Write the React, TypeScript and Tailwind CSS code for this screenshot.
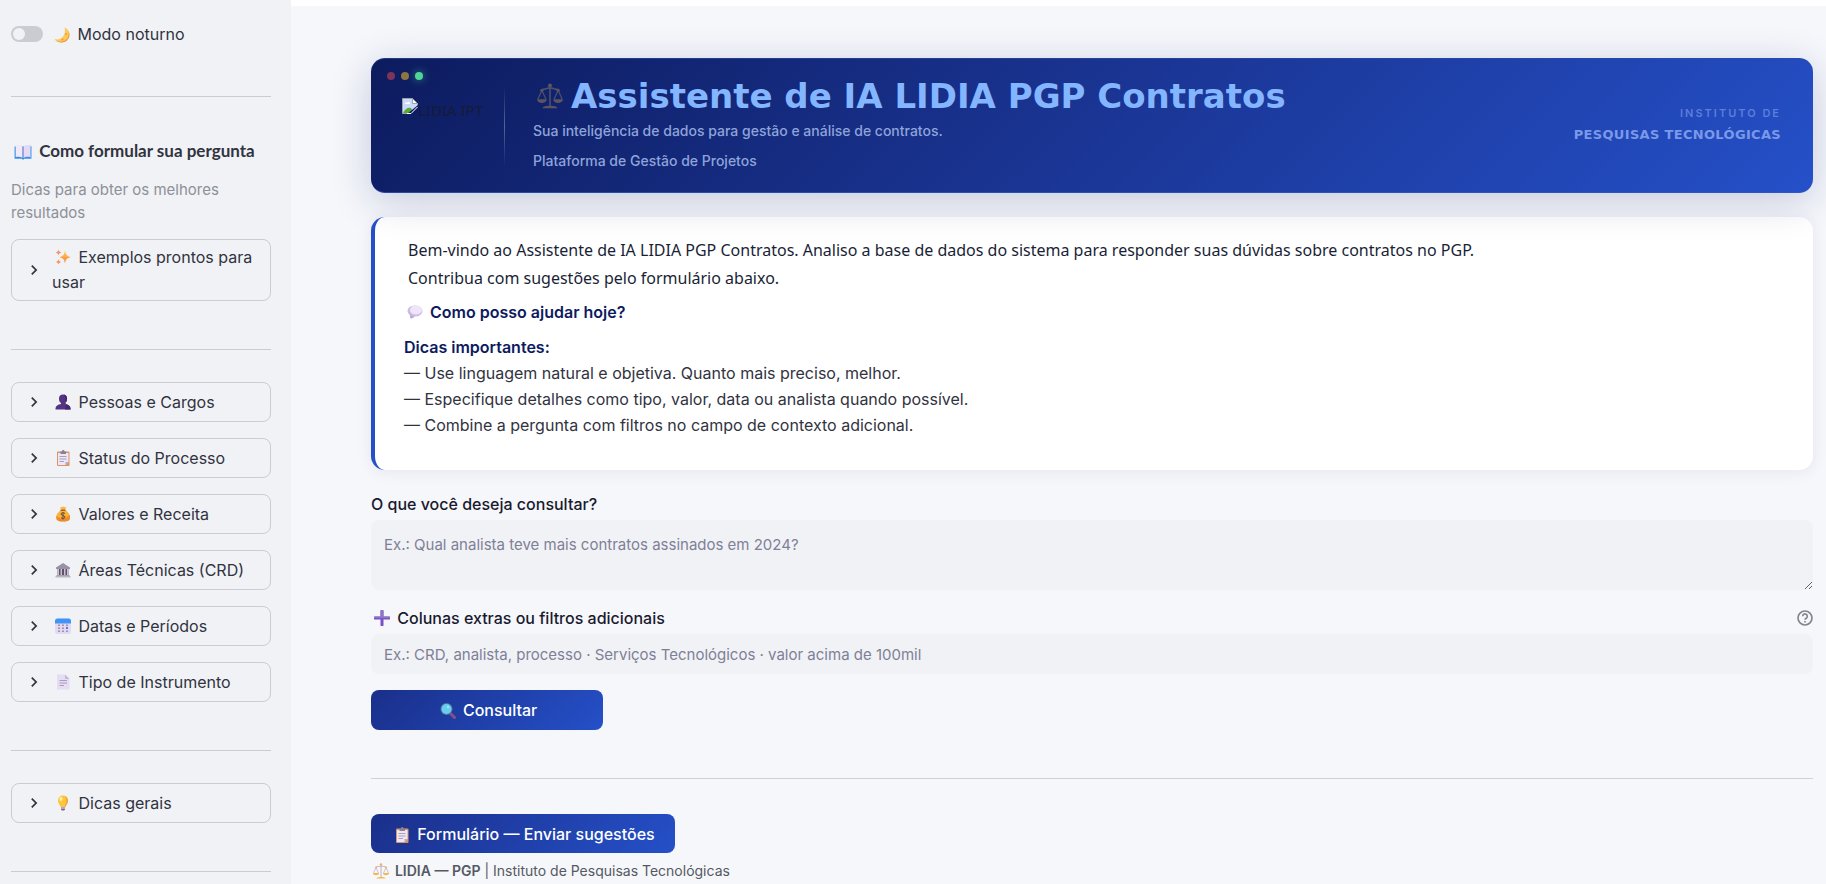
import type React from "react"

import { useState } from "react"
import { clsx } from "clsx"

function Emoji({ label, className, children }: { label: string; className?: string; children: React.ReactNode }) {
  return (
    <svg viewBox="0 0 32 32" role="img" aria-label={label} className={clsx("inline-block shrink-0", className)}>
      {children}
    </svg>
  )
}

function MoonEmoji({ className }: { className?: string }) {
  return (
    <Emoji label="Lua" className={className}>
      <path d="M21 1c6 2 10 8 10 14 0 9-7 16-16 16C9 31 4 29 1 24c7 2 13 0 17-5s5-11 3-18z" fill="#fcc85a" />
      <path d="M29 9c2 12-5 20-15 20-5 0-9-1-12-4 3 4 8 6 13 6 9 0 16-7 16-16 0-2-1-4-2-6z" fill="#f19b4c" />
      <circle cx="24" cy="14" r="2" fill="#e8a03c" />
      <circle cx="17" cy="25" r="2" fill="#e8a03c" />
    </Emoji>
  )
}

function BookEmoji({ className }: { className?: string }) {
  return (
    <Emoji label="Livro" className={className}>
      <path d="M1 6h30v22H18l-2 2-2-2H1z" fill="#3b8ee8" />
      <path d="M3 4c5-1 10 0 12 2v20c-3-2-8-2-12-1z" fill="#efe9fa" />
      <path d="M29 4c-5-1-10 0-12 2v20c3-2 8-2 12-1z" fill="#e4daf5" />
      <path d="M15 6h2v20h-2z" fill="#a99bc4" />
      <path d="M29 5h2v21h-2z" fill="#8fc3f7" />
    </Emoji>
  )
}

function SparklesEmoji({ className }: { className?: string }) {
  return (
    <Emoji label="Brilhos" className={className}>
      <path d="M20 3c1 8 3 11 11 13-8 2-10 5-11 13-1-8-3-11-11-13 8-2 10-5 11-13z" fill="#fdb446" />
      <path d="M20 16l11 0c-8 2-10 5-11 13-1-8-3-11-11-13z" fill="#fa9a50" />
      <path d="M7 1c1 4 2 5 6 6-4 1-5 2-6 6-1-4-2-5-6-6 4-1 5-2 6-6z" fill="#fb8f6b" />
      <path d="M7 20c1 4 2 5 5 6-3 1-4 2-5 5-1-3-2-4-5-5 3-1 4-2 5-6z" fill="#fb8f6b" />
    </Emoji>
  )
}

function PersonEmoji({ className }: { className?: string }) {
  return (
    <Emoji label="Pessoa" className={className}>
      <path
        d="M16 1c-5 0-8 3-8 8 0 4 1 7 4 9v2c-6 1-11 4-11 9v2h30v-2c0-5-5-8-11-9v-2c3-2 4-5 4-9 0-5-3-8-8-8z"
        fill="#533482"
      />
      <path d="M18 1c4 1 6 4 6 8 0 4-1 7-4 9v2c6 1 11 4 11 9v2H20c2-9 3-20-2-30z" fill="#43266e" />
    </Emoji>
  )
}

function ClipboardEmoji({ className }: { className?: string }) {
  return (
    <Emoji label="Prancheta" className={className}>
      <rect x="4" y="3" width="25" height="29" rx="2" fill="#d99565" />
      <path d="M6 6h21v18l-6 6H6z" fill="#ece6f7" />
      <path d="M21 30v-6h6z" fill="#b9a4c9" />
      <path d="M11 3h3c0-4 5-4 5 0h3v5H11z" fill="#8a8093" />
      <path d="M9 13h14M9 18h14M9 23h9" stroke="#a99fb8" strokeWidth="2" />
    </Emoji>
  )
}

function MoneyBagEmoji({ className }: { className?: string }) {
  return (
    <Emoji label="Saco de dinheiro" className={className}>
      <path d="M10 2c3 1 4 0 6-1 2 1 4 2 7 1l-3 6h-7z" fill="#fbb83a" />
      <path d="M12 8h9c6 4 9 10 9 15 0 6-4 8-14 8S2 29 2 23c0-5 4-11 10-15z" fill="#f9b437" />
      <path d="M3 20c-1 7 2 11 13 11 10 0 14-2 14-8 0-2 0-4-1-6-5 9-17 10-26 3z" fill="#ec8b32" />
      <path d="M11 7h10v3H11z" fill="#a5613c" />
      <path
        d="M20 15c-2-2-8-2-8 1 0 4 8 2 8 6 0 3-6 4-8 1M16 12v15"
        fill="none"
        stroke="#6b4a44"
        strokeWidth="2"
      />
    </Emoji>
  )
}

function BuildingEmoji({ className }: { className?: string }) {
  return (
    <Emoji label="Edifício clássico" className={className}>
      <path d="M2 11L16 2l14 9v3H2z" fill="#9a91a6" />
      <path d="M5 14h22v13H5z" fill="#5c5366" />
      <path d="M5 14h3v13H5zM11 14h3v13h-3zM18 14h3v13h-3zM24 14h3v13h-3z" fill="#c9c2d4" />
      <path d="M3 26h26v3H3z" fill="#a89fb3" />
      <path d="M1 28h30v3H1z" fill="#bbb2c6" />
    </Emoji>
  )
}

function CalendarEmoji({ className }: { className?: string }) {
  return (
    <Emoji label="Calendário" className={className}>
      <rect x="0" y="1" width="32" height="31" rx="5" fill="#e3d9f3" />
      <path d="M5 1h22a5 5 0 0 1 5 5v5H0V6a5 5 0 0 1 5-5z" fill="#3f94f5" />
      <path
        d="M6 13h4v3H6zM14 13h4v3h-4zM22 13h4v3h-4zM6 19h4v3H6zM14 19h4v3h-4zM6 25h4v3H6zM14 25h4v3h-4zM22 25h4v3h-4z"
        fill="#9d93ad"
      />
      <path d="M22 18h4v4h-4z" fill="#2f8cf0" />
    </Emoji>
  )
}

function PageEmoji({ className }: { className?: string }) {
  return (
    <Emoji label="Página" className={className}>
      <path d="M4 1h16l9 9v21H4z" fill="#e6dcf3" />
      <path d="M20 1v9h9z" fill="#c5b8d6" />
      <path d="M9 13h15M9 18h15M9 23h9" stroke="#a89cb8" strokeWidth="2" />
    </Emoji>
  )
}

function BulbEmoji({ className }: { className?: string }) {
  return (
    <Emoji label="Lâmpada" className={className}>
      <path d="M16 1C9 1 6 6 6 12c0 5 4 8 6 13h8c2-5 6-8 6-13 0-6-3-11-10-11z" fill="#fdc63f" />
      <path d="M20 2c4 9 2 16-2 23h2c2-5 6-8 6-13 0-5-2-8-6-10z" fill="#f5a73c" />
      <ellipse cx="12" cy="8" rx="3" ry="4" fill="#fff0b0" />
      <path d="M12 24h8v4h-8z" fill="#b6a6c6" />
      <path d="M12 28h8c0 4-8 4-8 0z" fill="#7d5a9c" />
    </Emoji>
  )
}

function SpeechEmoji({ className }: { className?: string }) {
  return (
    <Emoji label="Balão de fala" className={className}>
      <path d="M5 19l2 10c5 0 8-3 9-6z" fill="#b9a2d8" />
      <ellipse cx="16" cy="14" rx="15" ry="11" fill="#cdbae6" />
      <ellipse cx="18" cy="12" rx="12" ry="9" fill="#efe5f9" />
    </Emoji>
  )
}

function PlusEmoji({ className }: { className?: string }) {
  return (
    <Emoji label="Mais" className={className}>
      <path d="M13 2a3 3 0 0 1 6 0v11h11a3 3 0 0 1 0 6H19v11a3 3 0 0 1-6 0V19H2a3 3 0 0 1 0-6h11z" fill="#7c50c8" />
      <path d="M13 3a3 3 0 0 1 6 0v10h11c1 0 2 1 2 3H0c0-2 1-3 2-3h11z" fill="#8b76c4" />
    </Emoji>
  )
}

function MagnifierEmoji({ className }: { className?: string }) {
  return (
    <Emoji label="Lupa" className={className}>
      <path d="M20 20l9 9" stroke="#884f84" strokeWidth="6" strokeLinecap="round" />
      <circle cx="13" cy="12" r="12" fill="#537b9f" />
      <circle cx="13" cy="12" r="10" fill="#68cdf0" />
      <circle cx="16" cy="8" r="2" fill="#b7ecfa" />
    </Emoji>
  )
}

function ScalesEmoji({ className, muted = false }: { className?: string; muted?: boolean }) {
  const frame = muted ? "#4d506c" : "#c4aec9"
  const gold = muted ? "#5b5560" : "#f5b748"
  return (
    <Emoji label="Balança" className={className}>
      <path d="M16 2v26M6 8c4 0 6-2 10-2s6 2 10 2" fill="none" stroke={frame} strokeWidth="2" />
      <path d="M6 9L1 20M6 9l5 11M26 9l-5 11M26 9l5 11" fill="none" stroke={frame} strokeWidth="1.5" />
      <path d="M0 20h12c0 6-12 6-12 0zM20 20h12c0 6-12 6-12 0z" fill={gold} />
      <path d="M7 31c0-4 18-4 18 0z" fill={gold} />
      <circle cx="16" cy="3" r="2.5" fill={gold} />
      <circle cx="6" cy="9" r="2" fill={gold} />
      <circle cx="26" cy="9" r="2" fill={gold} />
    </Emoji>
  )
}

const filters = [
  { id: "people", title: "Pessoas e Cargos", icon: PersonEmoji },
  { id: "status", title: "Status do Processo", icon: ClipboardEmoji },
  { id: "values", title: "Valores e Receita", icon: MoneyBagEmoji },
  { id: "areas", title: "Áreas Técnicas (CRD)", icon: BuildingEmoji },
  { id: "dates", title: "Datas e Períodos", icon: CalendarEmoji },
  { id: "type", title: "Tipo de Instrumento", icon: PageEmoji },
]

const tips = [
  "Use linguagem natural e objetiva. Quanto mais preciso, melhor.",
  "Especifique detalhes como tipo, valor, data ou analista quando possível.",
  "Combine a pergunta com filtros no campo de contexto adicional.",
]

function Expander({ icon: Icon, title }: { icon: typeof MoonEmoji; title: string }) {
  const [open, setOpen] = useState(false)

  return (
    <button
      type="button"
      aria-expanded={open}
      onClick={() => setOpen(!open)}
      className="flex min-h-10 w-full items-center gap-2 rounded-lg border border-[#cbccd1] px-3 py-[5px] text-left text-base leading-[25px]"
    >
      <svg viewBox="0 0 24 24" className={clsx("size-5 shrink-0", open && "rotate-90")} fill="currentColor">
        <path d="M10 6L8.6 7.4l4.6 4.6-4.6 4.6L10 18l6-6z" />
      </svg>
      <span>
        <Icon className="mx-[3px] size-4 align-[-2px]" /> {title}
      </span>
    </button>
  )
}

function Sidebar() {
  const [dark, setDark] = useState(false)

  return (
    <aside className="w-[291px] shrink-0 bg-[#f0f2f6] pl-[11px] pr-5 pt-[22px]">
      <label className="flex h-6 items-center gap-2 text-base">
        <input
          type="checkbox"
          checked={dark}
          onChange={(e) => setDark(e.target.checked)}
          className="flex h-4 w-8 appearance-none items-center rounded-full bg-[#cbccd1] px-0.5 before:size-3 before:rounded-full before:bg-[#f0f2f6] checked:justify-end checked:bg-[#2550c8]"
        />
        <span>
          <MoonEmoji className="mx-[3px] size-4 align-[-3px]" /> Modo noturno
        </span>
      </label>

      <hr className="mt-[50px] border-[#cbccd1]" />

      <h2 className="mt-[42px] whitespace-nowrap font-['Lato'] text-[17px] font-bold leading-6">
        <BookEmoji className="mx-[3px] size-[18px] align-[-4px]" /> Como formular sua pergunta
      </h2>
      <p className="mt-[15px] text-[15px] leading-[23px] text-[#8e9097]">Dicas para obter os melhores resultados</p>

      <div className="mt-[15px]">
        <Expander icon={SparklesEmoji} title="Exemplos prontos para usar" />
      </div>

      <hr className="mt-12 border-[#cbccd1]" />

      <div className="mt-8 flex flex-col gap-4">
        {filters.map((filter) => (
          <Expander key={filter.id} icon={filter.icon} title={filter.title} />
        ))}
      </div>

      <hr className="mt-12 border-[#cbccd1]" />

      <div className="mt-8">
        <Expander icon={BulbEmoji} title="Dicas gerais" />
      </div>

      <hr className="mt-12 border-[#cbccd1]" />
    </aside>
  )
}

function Banner() {
  return (
    <header className="relative flex h-[135px] items-center rounded-[14px] border-y border-t-[#2b4aa0]/60 border-b-[#2f5cc8]/70 bg-[linear-gradient(135deg,#0d1b5e,#1a3594_50%,#2550c8)] bg-origin-border pl-[31px] pr-8 shadow-[0_8px_40px_rgba(13,27,94,0.2)]">
      {/* Window dots */}
      <div className="absolute left-4 top-[13px] flex gap-1.5">
        <span className="size-2 rounded-full bg-[#7c3558]" />
        <span className="size-2 rounded-full bg-[#8d763f]" />
        <span className="size-2 rounded-full bg-[#4fd697] shadow-[0_0_8px_rgba(79,214,151,0.6)]" />
      </div>

      {/* Logo placeholder */}
      <div className="flex w-[102px] pb-8 font-['Noto_Sans'] text-[15px] leading-6 text-[#151b3a]">
        <svg viewBox="0 0 16 16" className="size-4 shrink-0" aria-hidden="true">
          <path d="M.5.5h10l5 5v10H.5z" fill="#c9dbf8" stroke="#9aa0ac" />
          <path d="M10.500.5v5h5z" fill="#fff" stroke="#9aa0ac" />
          <path d="M3 6c0-2 2-2 2-1 1-2 3-1 3 1z" fill="#fff" />
          <path d="M1 15c2-4 5-6 8-5l3 5z" fill="#57ac33" />
          <path d="M5 16L16 7v9z" fill="#0e1d63" />
          <path d="M5 15.500h4L15.500 9" fill="none" stroke="#fff" />
        </svg>
        <span className="whitespace-nowrap">LIDIA IPT</span>
      </div>

      <div className="h-20 w-px bg-gradient-to-b from-transparent via-white/30 to-transparent" />

      <div className="ml-7 flex-1">
        <h1 className="flex items-center gap-2 whitespace-nowrap font-['DejaVu_Sans'] text-[34px] font-bold leading-10 text-[#84b5ff]">
          <ScalesEmoji muted className="ml-1 size-[26px]" />
          Assistente de IA LIDIA PGP Contratos
        </h1>
        <p className="text-sm font-medium leading-[30px] text-[#8ea4da]">
          Sua inteligência de dados para gestão e análise de contratos.
          <br />
          Plataforma de Gestão de Projetos
        </p>
      </div>

      <div className="pb-1 text-right leading-[22px]">
        <p className="text-[11px] font-semibold tracking-[2px] text-[#5c7dda]">INSTITUTO DE</p>
        <p className="font-['DejaVu_Sans'] text-[13px] font-bold tracking-wide text-[#7a99e8]">
          PESQUISAS TECNOLÓGICAS
        </p>
      </div>
    </header>
  )
}

function Welcome() {
  return (
    <section className="mt-6 rounded-[14px] border-l-4 border-[#2550c8] bg-white pb-8 pl-[29px] pr-8 pt-[19px] shadow-[0_2px_16px_rgba(13,27,94,0.07)]">
      <div className="pl-1 font-['Noto_Sans'] text-base leading-7 text-[#1a1f36]">
        <p>
          Bem-vindo ao Assistente de IA LIDIA PGP Contratos. Analiso a base de dados do sistema para responder suas
          dúvidas sobre contratos no PGP.
        </p>
        <p>Contribua com sugestões pelo formulário abaixo.</p>
      </div>
      <p className="mt-2 text-base font-semibold leading-6 text-[#0d1b5e]">
        <SpeechEmoji className="mx-[3px] size-4 align-[-2px]" /> Como posso ajudar hoje?
      </p>
      <div className="mt-[10px] text-base leading-[26px]">
        <p className="font-semibold text-[#0d1b5e]">Dicas importantes:</p>
        <ul>
          {tips.map((tip) => (
            <li key={tip}>— {tip}</li>
          ))}
        </ul>
      </div>
    </section>
  )
}

export default function App() {
  const [question, setQuestion] = useState("")
  const [extra, setExtra] = useState("")

  return (
    <div className="flex min-h-screen bg-[#f5f7fb] font-['Inter',sans-serif] text-[#31333f]">
      <Sidebar />

      <main className="min-w-0 flex-1">
        <div className="h-1.5 bg-white" />

        <div className="pl-20 pr-[13px] pt-[52px]">
          <Banner />
          <Welcome />

          <form onSubmit={(e) => e.preventDefault()} className="text-[#1a1a2e]">
            <label htmlFor="question" className="mt-[22px] block text-base font-medium leading-6">
              O que você deseja consultar?
            </label>
            <textarea
              id="question"
              value={question}
              onChange={(e) => setQuestion(e.target.value)}
              placeholder="Ex.: Qual analista teve mais contratos assinados em 2024?"
              className="mt-1 block h-[70px] w-full rounded-lg bg-[#f0f2f6] px-[13px] py-[13px] text-[15px] leading-6 placeholder:text-[#7f8096]"
            />

            <div className="mt-4 flex h-6 items-center justify-between">
              <label htmlFor="extra" className="text-base font-medium leading-6">
                <PlusEmoji className="mx-[3px] size-4 align-[-2px]" /> Colunas extras ou filtros adicionais
              </label>
              <button type="button" aria-label="Ajuda" className="text-[#84858f]">
                <svg viewBox="0 0 24 24" className="size-4" fill="none" stroke="currentColor" strokeWidth="2.500">
                  <circle cx="12" cy="12" r="10.500" />
                  <path d="M8.500 9.500a3.500 3.500 0 1 1 5.500 2.800c-1.300.9-2 1.300-2 2.500M12 16.500v2.200" />
                </svg>
              </button>
            </div>
            <input
              id="extra"
              type="text"
              value={extra}
              onChange={(e) => setExtra(e.target.value)}
              placeholder="Ex.: CRD, analista, processo · Serviços Tecnológicos · valor acima de 100mil"
              className="mt-1 block h-10 w-full rounded-lg bg-[#f0f2f6] px-[13px] text-[15px] placeholder:text-[#7f8096]"
            />

            <button
              type="submit"
              className="mt-4 block h-10 w-[232px] rounded-lg bg-[linear-gradient(135deg,#1a2f8a,#2550c8)] text-base font-medium text-white"
            >
              <MagnifierEmoji className="mx-[3px] size-4 align-[-3px]" /> Consultar
            </button>
          </form>

          <hr className="mt-12 border-[#cfd0d6]" />

          <a
            href="#sugestoes"
            className="mt-[35px] flex h-[39px] w-fit items-center rounded-lg bg-[linear-gradient(135deg,#1a2f8a,#2550c8)] px-5 text-base font-medium text-white"
          >
            <span>
              <ClipboardEmoji className="mx-[3px] size-4 align-[-3px]" /> Formulário — Enviar sugestões
            </span>
          </a>

          <footer className="mt-1.5 text-sm leading-6 text-[#555962]">
            <ScalesEmoji className="mx-0.5 size-4 align-[-3px]" /> <strong className="font-semibold">LIDIA — PGP</strong> |
            Instituto de Pesquisas Tecnológicas
          </footer>
        </div>
      </main>
    </div>
  )
}
